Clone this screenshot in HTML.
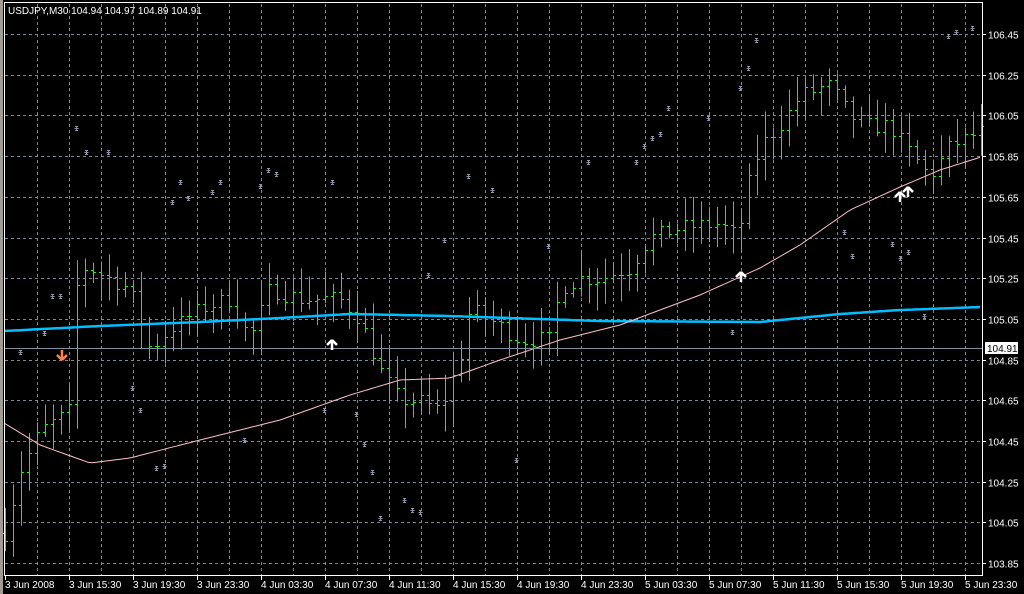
<!DOCTYPE html>
<html><head><meta charset="utf-8"><style>
html,body{margin:0;padding:0;background:#000;width:1024px;height:594px;overflow:hidden}
svg{display:block}
text{font-family:"Liberation Sans",sans-serif;font-size:10px;fill:#fff}
</style></head><body>
<svg id="s" width="1024" height="594" xmlns="http://www.w3.org/2000/svg">
<rect x="0" y="0" width="1024" height="594" fill="#000"/>
<rect x="0" y="0" width="3" height="594" fill="#a09c94"/>
<g id="grid" stroke="#778899" stroke-width="1" stroke-dasharray="3,3"></g>
<g id="bars" stroke="#00ff00" stroke-width="1"></g>
<polyline id="blue" fill="none" stroke="#00bfff" stroke-width="2.5"/>
<polyline id="pink" fill="none" stroke="#ffc0cb" stroke-width="1"/>
<line x1="4" y1="348.5" x2="982" y2="348.5" stroke="#8090a0"/>
<g id="stars"></g>
<g id="arrows"></g>
<line x1="4.5" y1="2" x2="4.5" y2="576" stroke="#fff"/>
<line x1="4" y1="2.5" x2="982" y2="2.5" stroke="#fff"/>
<line x1="982.5" y1="2" x2="982.5" y2="576" stroke="#fff"/>
<line x1="4" y1="575.5" x2="982" y2="575.5" stroke="#fff"/>
<g id="axis"></g>
<text x="8" y="14">USDJPY,M30  104.94 104.97 104.89 104.91</text>
<rect x="985" y="342" width="33" height="12" fill="#fff"/>
<text x="987" y="352" style="fill:#000">104.91</text>
</svg>
<script>
const NS="http://www.w3.org/2000/svg";
function el(p,t,a,txt){const e=document.createElementNS(NS,t);for(const k in a)e.setAttribute(k,a[k]);if(txt)e.textContent=txt;document.getElementById(p).appendChild(e);return e;}
const Y=p=>34+(106.45-p)*203.5;
for(let x=37;x<982;x+=32)el('grid','line',{x1:x+.5,y1:4,x2:x+.5,y2:575});
const prices=[106.45,106.25,106.05,105.85,105.65,105.45,105.25,105.05,104.85,104.65,104.45,104.25,104.05,103.85];
prices.forEach(p=>{const y=Math.round(Y(p))+.5;el('grid','line',{x1:5,y1:y,x2:982,y2:y});
 el('axis','line',{x1:982,y1:y,x2:986,y2:y,stroke:'#fff'});
 el('axis','text',{x:988,y:y+4},p.toFixed(2));});
const labels=["3 Jun 2008","3 Jun 15:30","3 Jun 19:30","3 Jun 23:30","4 Jun 03:30","4 Jun 07:30","4 Jun 11:30","4 Jun 15:30","4 Jun 19:30","4 Jun 23:30","5 Jun 03:30","5 Jun 07:30","5 Jun 11:30","5 Jun 15:30","5 Jun 19:30","5 Jun 23:30"];
labels.forEach((l,i)=>{const x=5+64*i;el('axis','line',{x1:x+.5,y1:576,x2:x+.5,y2:580,stroke:'#fff'});el('axis','text',{x:x,y:588},l);});
const kp=[[5,104.0],[20,104.3],[40,104.5],[70,104.6],[78,105.3],[90,105.3],[130,105.2],[150,104.9],[170,105.0],[200,105.1],[230,105.15],[250,104.95],[270,105.2],[300,105.15],[340,105.15],[360,105.05],[380,104.8],[400,104.65],[420,104.65],[440,104.6],[460,104.85],[470,105.1],[490,105.05],[520,104.95],[550,104.95],[560,105.2],[580,105.25],[600,105.25],[630,105.3],[650,105.45],[680,105.5],[720,105.52],[738,105.45],[748,105.7],[760,105.9],[780,106.0],[800,106.15],[830,106.2],[850,106.05],[870,106.0],[890,106.0],[910,105.87],[930,105.75],[950,105.9],[981,105.97]];
function P(x){for(let i=1;i<kp.length;i++)if(x<=kp[i][0]){const a=kp[i-1],b=kp[i];return a[1]+(b[1]-a[1])*(x-a[0])/(b[0]-a[0]);}return kp[kp.length-1][1];}
let seed=7;const rnd=()=>{seed=(seed*16807)%2147483647;return seed/2147483647;};
let prev=P(5);
for(let x=5;x<=981;x+=8){const c=P(x)+(rnd()-.5)*0.08;const o=prev;const hi=Math.max(o,c)+0.02+rnd()*0.11;const lo=Math.min(o,c)-0.02-rnd()*0.11;
 el('bars','line',{x1:x+.5,y1:Y(hi),x2:x+.5,y2:Y(lo)});
 el('bars','line',{x1:x-2,y1:Math.round(Y(o))+.5,x2:x,y2:Math.round(Y(o))+.5});
 el('bars','line',{x1:x+1,y1:Math.round(Y(c))+.5,x2:x+3,y2:Math.round(Y(c))+.5});prev=c;}
function pl(id,pts){let s=[];for(let x=4;x<=981;x+=4){let i=1;while(i<pts.length-1&&x>pts[i][0])i++;const a=pts[i-1],b=pts[i];s.push(x+','+(a[1]+(b[1]-a[1])*(x-a[0])/(b[0]-a[0])).toFixed(1));}document.getElementById(id).setAttribute('points',s.join(' '));}
pl('blue',[[4,331],[100,326],[200,322],[280,318],[350,314],[450,316],[600,321],[760,322],[840,314],[900,310],[981,307]]);
pl('pink',[[4,423],[40,445],[90,463],[130,458],[200,440],[280,420],[350,395],[400,380],[450,378],[500,360],[560,340],[620,325],[700,295],[760,268],[800,245],[850,210],[900,187],[940,170],[981,157]]);
const st=[[20,352],[44,333],[52,296],[60,296],[76,128],[86,152],[108,152],[132,388],[140,410],[156,468],[164,466],[172,202],[180,182],[188,198],[212,192],[220,182],[244,440],[260,186],[268,170],[276,174],[324,410],[332,182],[356,414],[364,444],[372,472],[380,518],[404,500],[412,510],[420,512],[428,275],[444,240],[468,176],[492,190],[516,460],[548,246],[588,162],[636,162],[644,146],[652,138],[660,134],[668,108],[708,118],[732,332],[740,88],[748,68],[756,40],[844,232],[852,256],[892,244],[900,258],[908,252],[924,316],[948,36],[956,32],[972,28]];
st.forEach(p=>{const x=p[0]+.5,y=p[1]+.5;el('stars','path',{d:`M${x-1.5} ${y-2}h3M${x-1.5} ${y+2}h3M${x-2} ${y}h4M${x} ${y-2}v4`,stroke:'#8899aa','stroke-width':1,fill:'none'});});
function arrow(x,y,up,col){const d=up?`M${x} ${y} l-5 5 M${x} ${y} l5 5 M${x} ${y} v10`:`M${x} ${y} l-5 -5 M${x} ${y} l5 -5 M${x} ${y} v-10`;el('arrows','path',{d:d,stroke:col,'stroke-width':2.5,fill:'none'});}
arrow(332,340,true,'#fff');arrow(741,272,true,'#fff');arrow(900,192,true,'#fff');arrow(908,187,true,'#fff');arrow(62,360,false,'#ff7f50');
</script>
</body></html>
